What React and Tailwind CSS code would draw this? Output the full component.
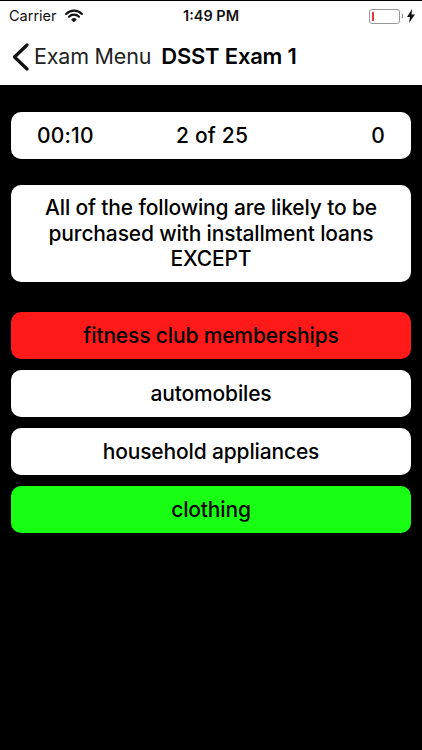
import React from 'react';

const font = { fontFamily: 'Inter, "Liberation Sans", sans-serif' };

const answers = [
  { text: 'fitness club memberships', color: 'bg-[#ff1a1a]' },
  { text: 'automobiles', color: 'bg-white' },
  { text: 'household appliances', color: 'bg-white' },
  { text: 'clothing', color: 'bg-[#19ff14]' },
];

const StatusBar = () => (
  <div className="h-[30px] relative flex items-center pl-[9px] pr-[7px] text-[#111]">
    <span className="text-[14.5px] leading-none">Carrier</span>
    <svg className="ml-[8px] w-[18px] h-[14px]" viewBox="0 0 19 14" fill="none" stroke="#111" strokeLinecap="round">
      <path d="M1.2 4.8a11.6 11.6 0 0 1 16.6 0" strokeWidth="2.2" />
      <path d="M4.2 7.8a7.4 7.4 0 0 1 10.6 0" strokeWidth="2.2" />
      <path d="M7.2 10.6a3.2 3.2 0 0 1 4.6 0L9.5 13z" strokeWidth="1" fill="#111" />
    </svg>
    <span className="absolute left-[183px] text-[14.5px] leading-none font-semibold">1:49 PM</span>
    <div className="ml-auto flex items-center">
      <div className="w-[31px] h-[15px] rounded-[3px] border border-[#999] flex items-center pl-[2px]">
        <div className="w-[1.5px] h-[9px] bg-[#e0353b]" />
      </div>
      <div className="w-[1px] h-[4px] bg-[#888] ml-[2px]" />
      <svg className="ml-[4px] w-[8px] h-[14px]" viewBox="0 0 8 14" fill="#111">
        <path d="M5 0L0 8h3l-1 6 6-8.4H4.6z" />
      </svg>
    </div>
  </div>
);

const NavBar = () => (
  <div className="h-[54px] flex items-center pl-[12px] pb-[3px] text-black">
    <svg className="w-[17px] h-[28px]" viewBox="0 0 17 28" fill="none" stroke="#111" strokeWidth="3.2" strokeLinecap="round" strokeLinejoin="round">
      <path d="M15 2L2.5 14 15 26" />
    </svg>
    <span className="ml-[5px] text-[21.5px] text-[#222] tracking-[-0.2px]">Exam Menu</span>
    <span className="ml-[10px] text-[22px] font-semibold tracking-[-0.2px]">DSST Exam 1</span>
  </div>
);

const App = () => {
  return (
    <div className="w-[422px] h-[750px] bg-black overflow-hidden pt-[1px]" style={font}>
      <div className="h-[84px] bg-white">
        <StatusBar />
        <NavBar />
      </div>

      <div className="px-[11px] pt-[27px] flex flex-col text-black text-[21px] font-[550] tracking-[-0.15px]">
        <div className="h-[47px] bg-white rounded-[10px] relative flex items-center justify-between pl-[26px] pr-[26px] tracking-[0.2px]">
          <span>00:10</span>
          <span className="absolute left-[165px]">2 of 25</span>
          <span>0</span>
        </div>

        <div className="mt-[26px] h-[97px] bg-white rounded-[10px] flex items-center justify-center text-center leading-[25.5px]">
          <p>
            All of the following are likely to be
            <br />
            purchased with installment loans
            <br />
            EXCEPT
          </p>
        </div>

        <div className="mt-[30px] flex flex-col gap-[11px]">
          {answers.map((a) => (
            <div key={a.text} className={`h-[47px] rounded-[10px] flex items-center justify-center ${a.color}`}>
              {a.text}
            </div>
          ))}
        </div>
      </div>
    </div>
  );
};

export default App;
